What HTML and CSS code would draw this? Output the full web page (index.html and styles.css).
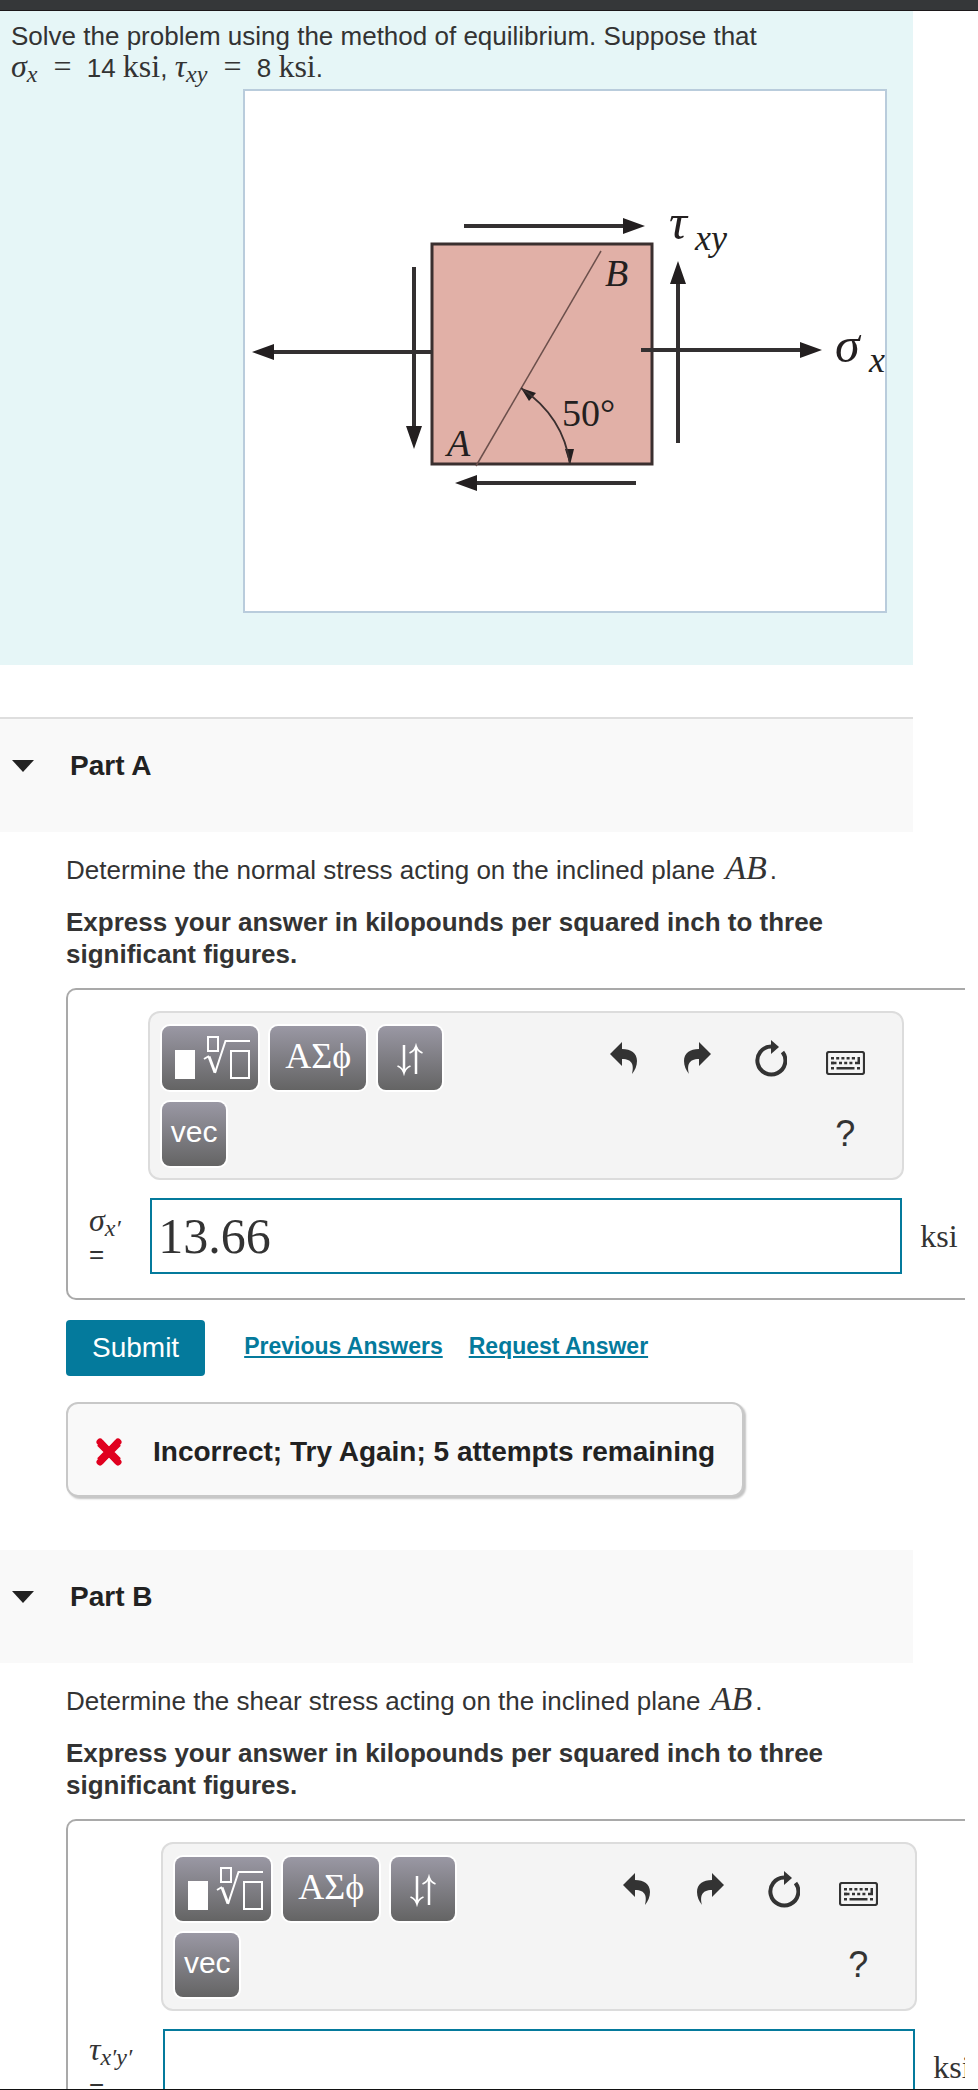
FILE: index.html
```html
<!DOCTYPE html>
<html lang="en">
<head>
  <meta charset="UTF-8">
  <meta name="viewport" content="width=device-width, initial-scale=1.0">
  <title>Stress on an Inclined Plane</title>
  <link rel="stylesheet" href="styles.css">
</head>
<body>
  <!-- Shared icons -->
  <svg class="sprite" aria-hidden="true">
    <symbol id="icon-templates" viewBox="0 0 96 64">
      <rect x="13" y="24" width="20" height="29" fill="#fff"/>
      <g fill="none" stroke="#fff" stroke-width="2">
        <rect x="46" y="11" width="10" height="14"/>
        <rect x="69" y="25" width="18" height="27"/>
        <path d="M42 33l5-3"/>
        <path d="M53 47L63.500 15H88"/>
        <path d="M47 30.500l6 16" stroke-width="3"/>
      </g>
    </symbol>
    <symbol id="icon-arrows" viewBox="0 0 64 64">
      <g fill="none" stroke="#fff" stroke-width="2.500">
        <path d="M26 19v27M38 48V21"/>
        <path d="M19.500 40q5 2 6.500 7q1.500-5 6.500-7M31.500 27q5-2 6.500-7q1.500 5 6.500 7" stroke-width="1.800"/>
      </g>
    </symbol>
    <symbol id="icon-undo" viewBox="0 0 27 32">
      <path d="M0 12L12 0v7c9 0 15 4 15 12c0 5-2 9-5 13c2-8 1-15-10-15v7z"/>
    </symbol>
    <symbol id="icon-redo" viewBox="0 0 27 32">
      <path d="M27 12L15 0v7c-9 0-15 4-15 12c0 5 2 9 5 13c-2-8-1-15 10-15v7z"/>
    </symbol>
    <symbol id="icon-reset" viewBox="0 0 32 37">
      <path d="M16 6.500A14 14 0 1 0 27.500 12" fill="none" stroke="#333" stroke-width="4"/>
      <path d="M16 0l8 7l-8 7z"/>
    </symbol>
    <symbol id="icon-keyboard" viewBox="0 0 39 24">
      <rect x="1" y="1" width="37" height="22" rx="2" fill="none" stroke="#333" stroke-width="2.200"/>
      <path d="M5 7.200h21M5 12h5M13 12h14M5 17.300h3M31 17.300h3" fill="none" stroke="#333" stroke-width="2.600" stroke-dasharray="3 2.200"/>
      <path d="M26 6h3v2.600h-3zM5 10.800h5.500v2.400h-5.500zM10.500 16h18v2.600h-18zM31.500 6h2.500v7.200h-5v-2.400h2.500z"/>
    </symbol>
  </svg>

  <div class="page">
    <div class="topbar"></div>

    <section class="intro">
      <p>Solve the problem using the method of equilibrium. Suppose that<br>
        <span class="math"><i>σ</i><i class="sub">x</i> <span class="eq">=</span></span> 14 <span class="math">ksi</span>, <span class="math"><i>τ</i><i class="sub">xy</i> <span class="eq">=</span></span> 8 <span class="math">ksi</span>.</p>
      <div class="figure">
        <svg viewBox="245 91 640 520" role="img" aria-label="Stress element with inclined plane AB at 50 degrees">
          <rect x="432" y="244" width="220" height="220" fill="#e1b0a7" stroke="#3a2f2f" stroke-width="3"/>
          <path d="M476 466L601 251" stroke="#6b4f4b" stroke-width="1.500"/>
          <g stroke="#333031" stroke-width="4">
            <path d="M464 226H626M636 483H474M414 267V428M678 443V282M432 352H272M641 350H802"/>
          </g>
          <g fill="#231f20">
            <path d="M645 226l-22-8v16zM455 483l22-8v16zM414 449l-8-23h16zM678 261l-8 23h16zM252 352l22-8v16zM822 350l-22-8v16z"/>
            <path d="M521 388l15 5l-7 8zM570 465l-5-16h9z"/>
          </g>
          <path d="M521 388Q564 417 570 465" fill="none" stroke="#3a2f2f" stroke-width="1.800"/>
          <g class="figure-text">
            <text x="605" y="286">B</text>
            <text x="447" y="456">A</text>
            <text x="562" y="426" class="upright">50°</text>
            <text x="669" y="239" class="greek">τ</text>
            <text x="695" y="250" class="index">xy</text>
            <text x="835" y="362" class="greek">σ</text>
            <text x="869" y="372" class="index">x</text>
          </g>
        </svg>
      </div>
    </section>

    <details class="part first" open>
      <summary><span class="caret"></span><h2>Part A</h2></summary>
      <div class="part-body">
        <p>Determine the normal stress acting on the inclined plane <i class="math plane">AB</i>.</p>
        <p class="instructions">Express your answer in kilopounds per squared inch to three significant figures.</p>
        <div class="answer">
          <div class="toolbar">
            <div class="toolbar-row">
              <button type="button" class="key wide" aria-label="Templates"><svg width="96" height="64"><use href="#icon-templates"/></svg></button>
              <button type="button" class="key wide greek-key">ΑΣϕ</button>
              <button type="button" class="key" aria-label="Arrows"><svg width="64" height="64"><use href="#icon-arrows"/></svg></button>
              <div class="tools">
                <button type="button" class="tool" aria-label="Undo"><svg width="27" height="32"><use href="#icon-undo"/></svg></button>
                <button type="button" class="tool" aria-label="Redo"><svg width="27" height="32"><use href="#icon-redo"/></svg></button>
                <button type="button" class="tool" aria-label="Reset"><svg width="32" height="37"><use href="#icon-reset"/></svg></button>
                <button type="button" class="tool keyboard" aria-label="Keyboard shortcuts"><svg width="39" height="24"><use href="#icon-keyboard"/></svg></button>
              </div>
            </div>
            <div class="toolbar-row">
              <button type="button" class="key">vec</button>
              <div class="tools">
                <button type="button" class="tool">?</button>
              </div>
            </div>
          </div>
          <label for="answer-a"><span class="math"><i>σ</i><i class="sub">x′</i></span><br>=</label>
          <input type="text" id="answer-a" value="13.66">
          <span class="unit">ksi</span>
        </div>
        <div class="actions">
          <button type="button" class="submit">Submit</button>
          <a href="#">Previous Answers</a>
          <a href="#">Request Answer</a>
        </div>
        <div class="feedback">
          <svg width="28" height="28" viewBox="0 0 28 28" aria-hidden="true">
            <path d="M5 5l18 18M23 5L5 23" stroke="#e0001f" stroke-width="8"/>
            <path d="M5 4l18 20M23 4L5 24" stroke="#e0001f" stroke-width="7" stroke-linecap="round"/>
          </svg>
          <span>Incorrect; Try Again; 5 attempts remaining</span>
        </div>
      </div>
    </details>

    <details class="part" open>
      <summary><span class="caret"></span><h2>Part B</h2></summary>
      <div class="part-body">
        <p>Determine the shear stress acting on the inclined plane <i class="math plane">AB</i>.</p>
        <p class="instructions">Express your answer in kilopounds per squared inch to three significant figures.</p>
        <div class="answer">
          <div class="toolbar">
            <div class="toolbar-row">
              <button type="button" class="key wide" aria-label="Templates"><svg width="96" height="64"><use href="#icon-templates"/></svg></button>
              <button type="button" class="key wide greek-key">ΑΣϕ</button>
              <button type="button" class="key" aria-label="Arrows"><svg width="64" height="64"><use href="#icon-arrows"/></svg></button>
              <div class="tools">
                <button type="button" class="tool" aria-label="Undo"><svg width="27" height="32"><use href="#icon-undo"/></svg></button>
                <button type="button" class="tool" aria-label="Redo"><svg width="27" height="32"><use href="#icon-redo"/></svg></button>
                <button type="button" class="tool" aria-label="Reset"><svg width="32" height="37"><use href="#icon-reset"/></svg></button>
                <button type="button" class="tool keyboard" aria-label="Keyboard shortcuts"><svg width="39" height="24"><use href="#icon-keyboard"/></svg></button>
              </div>
            </div>
            <div class="toolbar-row">
              <button type="button" class="key">vec</button>
              <div class="tools">
                <button type="button" class="tool">?</button>
              </div>
            </div>
          </div>
          <label for="answer-b" class="tall"><span class="math"><i>τ</i><i class="sub">x′y′</i></span><br>=</label>
          <input type="text" id="answer-b">
          <span class="unit">ksi</span>
        </div>
      </div>
    </details>
  </div>
</body>
</html>
```
FILE: styles.css
```css
* {
  box-sizing: border-box;
}
body {
  margin: 0;
  background: #fff;
  color: #333;
  font-family: "Liberation Sans", Arial, sans-serif;
  font-size: 26px;
  line-height: 32px;
}
p, h2 {
  margin: 0;
}
button, input {
  font-family: inherit;
}
.sprite {
  display: none;
}
.page {
  height: 100vh;
  overflow: hidden;
  border-bottom: 1px solid #111;
}
.topbar {
  height: 11px;
  background: #353739;
  border-bottom: 1px solid #1c181a;
}

/* Inline math */
.math {
  font-family: "Liberation Serif", "Times New Roman", serif;
  font-size: 32px;
  line-height: 0;
}
.math .sub {
  font-size: 24px;
  position: relative;
  top: 5px;
}
.math .eq {
  margin: 0 8px;
}
.plane {
  font-size: 34px;
  margin: 0 3px;
}

/* Problem statement */
.intro {
  margin-right: 65px;
  padding: 9px 26px 52px 0;
  background: #e6f6f7;
}
.intro p {
  padding-left: 11px;
}
.figure {
  margin: 5px 0 0 243px;
  border: 2px solid #b9ccdc;
  background: #fff;
}
.figure svg {
  display: block;
  width: 100%;
}
.figure-text {
  font-family: "Liberation Serif", "Times New Roman", serif;
  font-size: 38px;
  font-style: italic;
  fill: #231f20;
}
.figure-text .upright {
  font-style: normal;
}
.figure-text .greek {
  font-size: 50px;
}
.figure-text .index {
  font-size: 36px;
}

/* Parts */
.part summary {
  display: flex;
  align-items: center;
  gap: 36px;
  margin-right: 65px;
  padding: 31px 12px 50px;
  background: #f9f9f9;
  color: #222;
  list-style: none;
  cursor: pointer;
}
.part.first summary {
  margin-top: 52px;
  border-top: 2px solid #dedede;
}
.part h2 {
  font-size: 28px;
  line-height: 32px;
}
.caret {
  border: solid transparent;
  border-width: 12px 11px 0;
  border-top-color: #222;
}
.part-body {
  padding: 22px 13px 53px 66px;
}
.instructions {
  margin: 20px 65px 0 0;
  font-weight: bold;
}

/* Answer editor */
.answer {
  display: grid;
  grid-template-columns: auto calc(100% - 120px) auto;
  align-items: center;
  row-gap: 18px;
  margin-top: 18px;
  padding: 21px 0 24px 21px;
  border: 2px solid #a9a9a9;
  border-right: none;
  border-radius: 10px 0 0 10px;
  overflow: hidden;
}
.toolbar {
  grid-column: 2;
  display: flex;
  flex-direction: column;
  gap: 12px;
  padding: 13px 32px 12px 12px;
  background: #f4f4f4;
  border: 2px solid #dcdcdc;
  border-radius: 12px;
}
.toolbar-row {
  display: flex;
  gap: 12px;
}
.key {
  width: 64px;
  height: 64px;
  padding: 0 0 4px;
  border: none;
  border-radius: 8px;
  background: linear-gradient(#9a98a4, #646464);
  box-shadow: 0 0 0 2px #fff;
  color: #fff;
  font-size: 30px;
  cursor: pointer;
}
.key.wide {
  width: 96px;
}
.key svg {
  display: block;
}
.key:has(svg) {
  padding: 0;
}
.greek-key {
  font-family: "Liberation Serif", "Times New Roman", serif;
  font-size: 36px;
}
.tools {
  display: flex;
  gap: 24px;
  margin-left: auto;
}
.tool {
  display: flex;
  align-items: center;
  justify-content: center;
  width: 50px;
  height: 64px;
  padding: 0;
  border: none;
  background: none;
  color: #333;
  fill: #333;
  font-size: 36px;
  cursor: pointer;
}
.tool.keyboard {
  padding-top: 10px;
}
.answer label {
  grid-column: 1;
  padding: 4px 20px 0 0;
}
.answer label.tall {
  padding-right: 29px;
  line-height: 36px;
}
.answer input {
  height: 76px;
  margin: 0 2px;
  padding: 0 6px;
  border: 2px solid #047a9c;
  background: #fff;
  color: #333;
  font-family: "Liberation Serif", "Times New Roman", serif;
  font-size: 50px;
}
.unit {
  padding-left: 16px;
  font-family: "Liberation Serif", "Times New Roman", serif;
  font-size: 32px;
}

/* Submit row */
.actions {
  display: flex;
  align-items: center;
  gap: 26px;
  margin-top: 20px;
}
.submit {
  height: 56px;
  margin-right: 13px;
  padding: 0 26px;
  border: none;
  border-radius: 4px;
  background: #047a9c;
  color: #fff;
  font-size: 28px;
  cursor: pointer;
}
.actions a {
  padding-bottom: 4px;
  color: #047a9c;
  font-size: 23px;
  font-weight: bold;
  text-decoration-thickness: 2px;
  text-underline-offset: 2px;
}
.feedback {
  display: flex;
  align-items: center;
  gap: 30px;
  width: fit-content;
  height: 95px;
  margin-top: 26px;
  padding: 4px 27px 0;
  background: #f9f9f9;
  border: 2px solid #c8c8c8;
  border-radius: 12px;
  box-shadow: 2px 2px 2px #c4c4c4;
  color: #222;
  font-size: 28px;
  font-weight: bold;
}
```
